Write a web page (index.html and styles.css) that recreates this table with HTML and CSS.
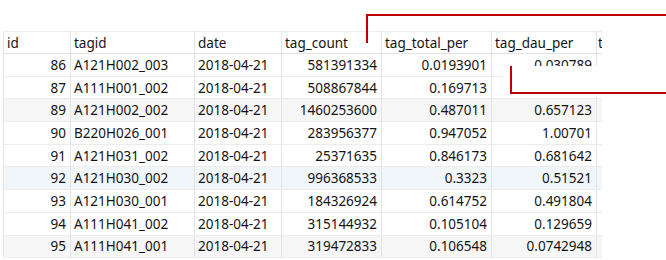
FILE: index.html
```html
<!DOCTYPE html>
<html>
<head>
<meta charset="utf-8">
<link rel="stylesheet" href="styles.css">
</head>
<body>
<div class="page">
  <div class="grid-wrap">
    <table class="grid">
      <colgroup>
        <col class="c-id"><col class="c-tagid"><col class="c-date"><col class="c-count"><col class="c-total"><col class="c-dau"><col class="c-more">
      </colgroup>
      <thead>
        <tr><th>id</th><th>tagid</th><th>date</th><th>tag_count</th><th>tag_total_per</th><th>tag_dau_per</th><th>t</th></tr>
      </thead>
      <tbody>
        <tr><td class="num">86</td><td>A121H002_003</td><td>2018-04-21</td><td class="num">581391334</td><td class="num">0.0193901</td><td class="num">0.030789</td><td></td></tr>
        <tr><td class="num">87</td><td>A111H001_002</td><td>2018-04-21</td><td class="num">508867844</td><td class="num">0.169713</td><td class="num">0.135201</td><td></td></tr>
        <tr class="alt"><td class="num">89</td><td>A121H002_002</td><td>2018-04-21</td><td class="num">1460253600</td><td class="num">0.487011</td><td class="num">0.657123</td><td></td></tr>
        <tr><td class="num">90</td><td>B220H026_001</td><td>2018-04-21</td><td class="num">283956377</td><td class="num">0.947052</td><td class="num">1.00701</td><td></td></tr>
        <tr><td class="num">91</td><td>A121H031_002</td><td>2018-04-21</td><td class="num">25371635</td><td class="num">0.846173</td><td class="num">0.681642</td><td></td></tr>
        <tr class="sel"><td class="num">92</td><td>A121H030_002</td><td>2018-04-21</td><td class="num">996368533</td><td class="num">0.3323</td><td class="num">0.51521</td><td></td></tr>
        <tr><td class="num">93</td><td>A121H030_001</td><td>2018-04-21</td><td class="num">184326924</td><td class="num">0.614752</td><td class="num">0.491804</td><td></td></tr>
        <tr><td class="num">94</td><td>A111H041_002</td><td>2018-04-21</td><td class="num">315144932</td><td class="num">0.105104</td><td class="num">0.129659</td><td></td></tr>
        <tr class="alt"><td class="num">95</td><td>A111H041_001</td><td>2018-04-21</td><td class="num">319472833</td><td class="num">0.106548</td><td class="num">0.0742948</td><td></td></tr>
      </tbody>
    </table>
  </div>
  <div class="callout-top"></div>
  <div class="callout-box"><div class="callout-line"></div></div>
</div>
</body>
</html>
```
FILE: styles.css
```css
html, body {
  margin: 0;
  padding: 0;
  background: #ffffff;
}
.page {
  position: relative;
  width: 666px;
  height: 260px;
  overflow: hidden;
  font-family: "Noto Sans", "Open Sans", sans-serif;
  font-size: 13.5px;
  color: #141414;
}
.grid-wrap {
  margin: 31px 0 0 3px;
  width: 599px;
  overflow: hidden;
}
.grid {
  border-collapse: collapse;
  table-layout: fixed;
  width: 599px;
}
.c-id { width: 67px; }
.c-tagid { width: 124px; }
.c-date { width: 87px; }
.c-count { width: 100px; }
.c-total { width: 110px; }
.c-dau { width: 105px; }
.c-more { width: 6px; }
.grid th, .grid td {
  padding: 0 4px 0 3px;
  white-space: nowrap;
  overflow: hidden;
  text-align: left;
  font-weight: normal;
  vertical-align: middle;
  border-left: 1px solid #e3e3e3;
  border-right: 1px solid #e3e3e3;
  border-bottom: 1px solid #ececec;
}
.grid th:last-child, .grid td:last-child {
  padding: 0 0 0 1px;
  border-right: none;
}
.grid th {
  height: 21px;
  border-top: 1px solid #ececec;
  border-bottom: 1px solid #e3e3e3;
}
.grid td {
  height: 21.7px;
}
.grid td.num {
  text-align: right;
}
.grid tr.alt td {
  background: #f6f6f6;
}
.grid tr.sel td {
  background: #f1f6fb;
}
.callout-top {
  position: absolute;
  left: 366px;
  top: 14px;
  width: 300px;
  height: 27px;
  border-left: 2px solid #c00000;
  border-top: 2px solid #c00000;
}
.callout-box {
  position: absolute;
  left: 503px;
  top: 66px;
  width: 163px;
  height: 31px;
  background: #ffffff;
}
.callout-line {
  margin-left: 7px;
  height: 26px;
  border-left: 2px solid #c00000;
  border-bottom: 2px solid #c00000;
}
```
